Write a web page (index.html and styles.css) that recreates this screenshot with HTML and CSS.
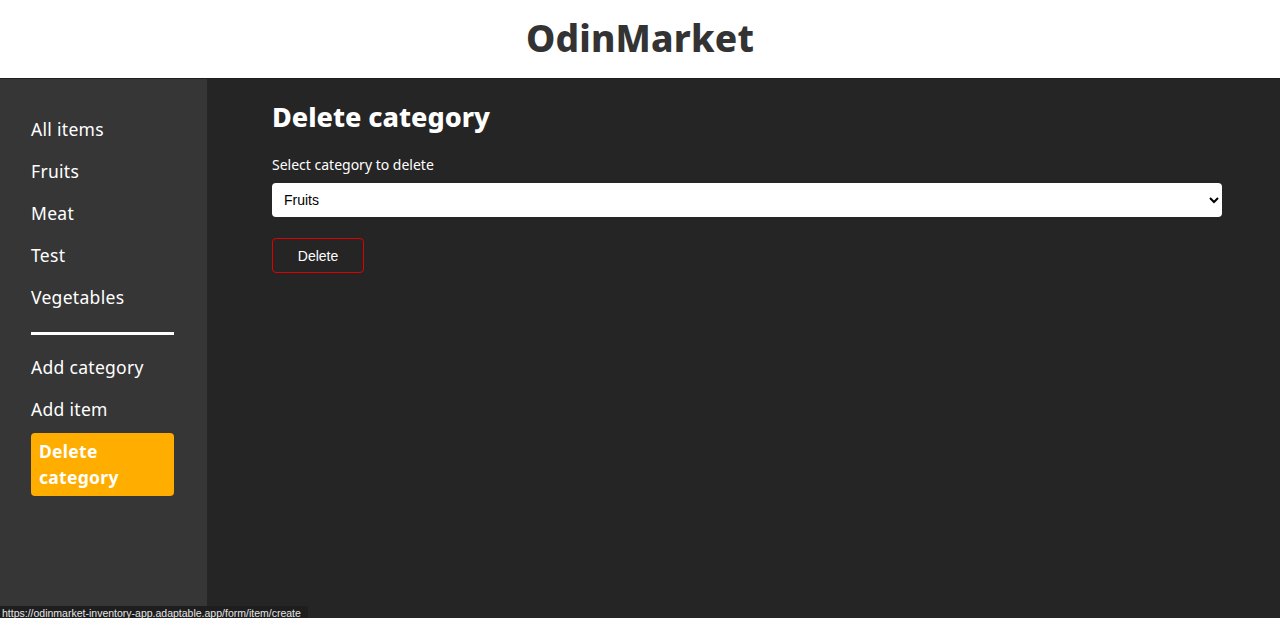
FILE: index.html
```html
<!DOCTYPE html>
<html lang="en">
<head>
<meta charset="utf-8">
<title>OdinMarket</title>
<link rel="stylesheet" href="styles.css">
</head>
<body>
<header class="site-header">
  <h1 class="logo">OdinMarket</h1>
</header>
<div class="layout">
  <nav class="sidebar">
    <ul class="nav-list">
      <li><a href="#">All items</a></li>
      <li><a href="#">Fruits</a></li>
      <li><a href="#">Meat</a></li>
      <li><a href="#">Test</a></li>
      <li><a href="#">Vegetables</a></li>
    </ul>
    <hr class="divider">
    <ul class="nav-list">
      <li><a href="#">Add category</a></li>
      <li><a href="#">Add item</a></li>
      <li class="active-item"><a href="#" class="active">Delete category</a></li>
    </ul>
  </nav>
  <main class="content">
    <h2 class="page-title">Delete category</h2>
    <form class="form">
      <label class="form-label" for="cat">Select category to delete</label>
      <select id="cat" class="select">
        <option>Fruits</option>
        <option>Meat</option>
        <option>Test</option>
        <option>Vegetables</option>
      </select>
      <button type="button" class="btn-delete">Delete</button>
    </form>
  </main>
</div>
<div class="status-bar">https://odinmarket-inventory-app.adaptable.app/form/item/create</div>
</body>
</html>
```
FILE: styles.css
```css
* { box-sizing: border-box; }
html, body { margin: 0; padding: 0; height: 100%; }
body {
  font-family: "Noto Sans", "DejaVu Sans", sans-serif;
  background: #252525;
  display: flex;
  flex-direction: column;
  overflow: hidden;
}
.site-header {
  height: 79px;
  background: #ffffff;
  display: flex;
  align-items: center;
  justify-content: center;
  border-bottom: 1px solid #1e1e1e;
  padding-bottom: 4px;
}
.logo {
  margin: 0;
  font-size: 37px;
  font-weight: 800;
  color: #333333;
  letter-spacing: 0.2px;
}
.layout {
  flex: 1;
  display: flex;
}
.sidebar {
  width: 207px;
  background: #363636;
  padding: 37px 33px 0 31px;
}
.nav-list {
  list-style: none;
  margin: 0;
  padding: 0;
  display: flex;
  flex-direction: column;
  gap: 15px;
}
.nav-list a {
  display: block;
  color: #ffffff;
  text-decoration: none;
  font-size: 17.5px;
  line-height: 27px;
  letter-spacing: 0.3px;
}
.nav-list .active-item {
  margin-top: -5px;
}
.nav-list a.active {
  background: #ffae00;
  border-radius: 4px;
  padding: 6px 8px;
  font-weight: 700;
  line-height: 25.5px;
}
.divider {
  margin: 21px 0 19px 0;
  border: none;
  height: 3px;
  background: #ffffff;
}
.content {
  flex: 1;
  padding: 18px 58px 0 65px;
}
.page-title {
  margin: 0;
  font-size: 27px;
  font-weight: 800;
  color: #ffffff;
  line-height: 40px;
}
.form {
  display: flex;
  flex-direction: column;
  align-items: flex-start;
  margin-top: 18px;
}
.form-label {
  color: #ffffff;
  font-size: 14px;
  line-height: 20px;
  margin-bottom: 8px;
}
.select {
  width: 100%;
  height: 34px;
  border: none;
  border-radius: 4px;
  background: #ffffff;
  font-family: "Liberation Sans", Arial, sans-serif;
  font-size: 14px;
  padding: 0 8px;
  color: #000;
}
.btn-delete {
  margin-top: 21px;
  width: 92px;
  height: 35px;
  background: transparent;
  border: 1.5px solid #e00000;
  border-radius: 4px;
  color: #ffffff;
  font-family: "Liberation Sans", Arial, sans-serif;
  font-size: 14px;
  cursor: pointer;
}
.status-bar {
  position: fixed;
  left: 0;
  bottom: 0;
  background: #1e1e1e;
  color: #e6e6e6;
  font-family: "Liberation Sans", Arial, sans-serif;
  font-size: 10.5px;
  line-height: 13px;
  padding: 1px 7px 0 2px;
  border-top-right-radius: 3px;
  height: 12px;
  overflow: hidden;
}
```
